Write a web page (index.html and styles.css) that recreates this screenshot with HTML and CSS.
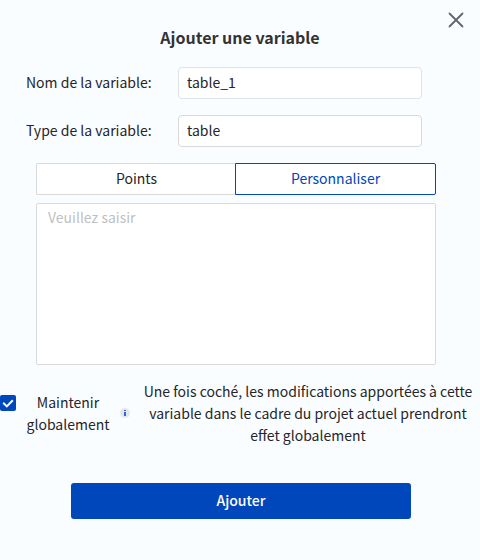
FILE: index.html
```html
<!DOCTYPE html>
<html lang="fr">
<head>
<meta charset="utf-8">
<meta name="viewport" content="width=device-width, initial-scale=1">
<title>Ajouter une variable</title>
<link rel="stylesheet" href="styles.css">
</head>
<body>
<main class="dialog">
  <button class="close" type="button" aria-label="Fermer">
    <svg viewBox="0 0 16 16" width="16" height="16" aria-hidden="true"><path d="M1.5 1.5l13 13M14.5 1.5l-13 13" fill="none" stroke="#62636f" stroke-width="1.8" stroke-linecap="round"/></svg>
  </button>
  <h1 class="title">Ajouter une variable</h1>
  <form class="form">
    <div class="row">
      <label class="label" for="name">Nom de la variable:</label>
      <input class="field field-light" id="name" type="text" value="table_1">
    </div>
    <div class="row">
      <label class="label" for="type">Type de la variable:</label>
      <input class="field" id="type" type="text" value="table">
    </div>
    <div class="content">
      <div class="tabs">
        <button class="tab" type="button">Points</button>
        <button class="tab tab-active" type="button">Personnaliser</button>
      </div>
      <textarea class="area" aria-label="Contenu" placeholder="Veuillez saisir"></textarea>
    </div>
    <div class="keep">
      <input class="check" id="keep" type="checkbox" checked>
      <label class="keep-label" for="keep">Maintenir globalement</label>
      <svg class="info" viewBox="0 0 10 10" width="10" height="10" aria-hidden="true"><circle cx="5" cy="5" r="5" fill="#e2e8f0"/><path d="M4 2h2v1H4zM4 4h2v4H4z" fill="#3568cc"/></svg>
      <p class="hint">Une fois coché, les modifications apportées à cette variable dans le cadre du projet actuel prendront effet globalement</p>
    </div>
    <div class="actions">
      <button class="submit" type="button">Ajouter</button>
    </div>
  </form>
</main>
</body>
</html>
```
FILE: styles.css
```css
* {
  box-sizing: border-box;
}

body {
  margin: 0;
  background: #fafdff;
  color: #252529;
  font: 14px/22px "Noto Sans CJK SC", "Noto Sans", sans-serif;
}

button,
input,
textarea {
  font: inherit;
  color: inherit;
}

.dialog {
  position: relative;
  padding: 23px 0 40px;
}

.close {
  position: absolute;
  top: 8px;
  right: 12px;
  display: flex;
  padding: 4px;
  border: 0;
  background: none;
}

.title {
  margin: 0 0 16px;
  color: #333;
  font-size: 16px;
  line-height: 28px;
  font-weight: 700;
  text-align: center;
}

.row {
  display: flex;
  align-items: center;
  margin: 0 58px 16px 26px;
}

.label {
  flex: 0 0 152px;
  padding-bottom: 2px;
}

.field {
  flex: 1;
  min-width: 0;
  height: 32px;
  padding: 0 8px 2px;
  border: 1px solid #d9d9d9;
  border-radius: 4px;
  background: #fff;
}

.field-light {
  border-color: #dfe2e8;
}

.content {
  margin: 0 44px 15px 36px;
}

.tabs {
  display: flex;
  margin-bottom: 8px;
}

.tab {
  flex: 1;
  height: 32px;
  padding: 0 0 2px;
  border: 1px solid #d9d9d9;
  border-right: 0;
  border-radius: 2px 0 0 2px;
  background: #fff;
}

.tab-active {
  margin-left: -1px;
  border: 1px solid #0047bb;
  border-radius: 0 2px 2px 0;
  color: #0047bb;
}

.area {
  display: block;
  width: 100%;
  height: 162px;
  padding: 2px 11px;
  border: 1px solid #d9d9d9;
  border-radius: 2px;
  background: #fff;
  resize: none;
}

.area::placeholder {
  color: #bfbfbf;
}

.keep {
  display: flex;
  align-items: center;
  text-align: center;
}

.check {
  appearance: none;
  flex: none;
  align-self: flex-start;
  width: 16px;
  height: 16px;
  margin: 15px 8px 0 0;
  border-radius: 2px;
  background: #0047bb;
}

.check:checked {
  background: #0047bb url("data:image/svg+xml,%3Csvg xmlns='http://www.w3.org/2000/svg' viewBox='0 0 16 16'%3E%3Cpath d='M3.2 7.8l3.6 3.6 6-6.2' fill='none' stroke='white' stroke-width='2'/%3E%3C/svg%3E") center / 16px 16px;
}

.keep-label {
  flex: 0 0 88px;
}

.info {
  flex: none;
  margin: 0 8px;
}

.hint {
  flex: 1;
  margin: 0 4px 0 2px;
}

.actions {
  display: flex;
  margin-top: 37px;
  padding: 0 69px 0 71px;
}

.submit {
  flex: 1;
  height: 36px;
  padding: 0 0 2px;
  border: 0;
  border-radius: 3px;
  background: #0047bb;
  color: #fff;
  font-weight: 500;
}
```
